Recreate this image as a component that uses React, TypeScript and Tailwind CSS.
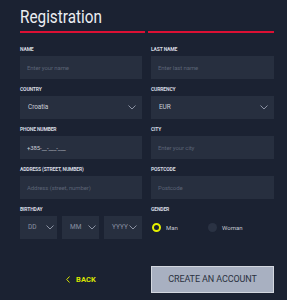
import React from "react";

const Chevron = () => (
  <svg width="8" height="5" viewBox="0 0 8 5" className="shrink-0">
    <polyline points="0.5,0.5 4,4 7.5,0.5" fill="none" stroke="#8b92a3" strokeWidth="1" />
  </svg>
);

const Label = ({ children }: { children: React.ReactNode }) => (
  <div className="h-[8px] mb-[3px] text-[5px] leading-[8px] font-bold tracking-[-0.15px] text-[#d6d9e0] uppercase">
    {children}
  </div>
);

const Input = ({ placeholder, value }: { placeholder?: string; value?: string }) => (
  <div className="h-[23px] bg-[#272f3f] flex items-center pl-[7px] text-[6px] tracking-[-0.1px]">
    {value ? (
      <span className="text-[#c9cdd6]">{value}</span>
    ) : (
      <span className="text-[#5b6375]">{placeholder}</span>
    )}
  </div>
);

const Select = ({ value }: { value: string }) => (
  <div className="h-[23px] bg-[#272f3f] flex items-center justify-between pl-[8px] pr-[6px] text-[6.5px] tracking-[-0.1px]">
    <span className="text-[#c9cdd6]">{value}</span>
    <Chevron />
  </div>
);

const Field = ({ label, children }: { label: string; children: React.ReactNode }) => (
  <div className="flex flex-col">
    <Label>{label}</Label>
    {children}
  </div>
);

export default function App() {
  return (
    <div className="w-[287px] h-[300px] bg-[#1b2232] font-['Roboto',sans-serif] overflow-hidden">
      <div className="pl-[20px] pr-[13px] pt-[6px]">
        <h1 className="text-[18px] leading-[21px] text-[#eceef2] font-normal">
          <span className="inline-block scale-x-[0.85] origin-left">Registration</span>
        </h1>
        <div className="mt-[4px] flex gap-[3px]">
          <div className="h-[2px] w-[125px] bg-[#dc1034]" />
          <div className="h-[2px] flex-1 bg-[#dc1034]" />
        </div>
        <div className="mt-[12px] grid grid-cols-[122px_123px] gap-x-[9px] gap-y-[6px]">
          <Field label="Name">
            <Input placeholder="Enter your name" />
          </Field>
          <Field label="Last name">
            <Input placeholder="Enter last name" />
          </Field>
          <Field label="Country">
            <Select value="Croatia" />
          </Field>
          <Field label="Currency">
            <Select value="EUR" />
          </Field>
          <Field label="Phone number">
            <Input value="+385-__-___-___" />
          </Field>
          <Field label="City">
            <Input placeholder="Enter your city" />
          </Field>
          <Field label="Address (street, number)">
            <Input placeholder="Address (street, number)" />
          </Field>
          <Field label="Postcode">
            <Input placeholder="Postcode" />
          </Field>
          <Field label="Birthday">
            <div className="flex gap-[5px]">
              <div className="w-[37px] h-[23px] bg-[#272f3f] flex items-center pl-[8px] gap-[9px] text-[6.5px] text-[#8b92a3]">
                <span>DD</span>
                <Chevron />
              </div>
              <div className="w-[37px] h-[23px] bg-[#272f3f] flex items-center pl-[8px] gap-[7px] text-[6.5px] text-[#8b92a3]">
                <span>MM</span>
                <Chevron />
              </div>
              <div className="flex-1 h-[23px] bg-[#272f3f] flex items-center pl-[8px] gap-[1px] text-[6.5px] text-[#8b92a3]">
                <span>YYYY</span>
                <Chevron />
              </div>
            </div>
          </Field>
          <Field label="Gender">
            <div className="h-[23px] flex items-center pl-[1px]">
              <div className="w-[56px] flex items-center gap-[5px]">
                <div className="w-[9px] h-[9px] rounded-full border-[2px] border-[#e4f000] bg-[#1b2232]" />
                <span className="text-[6px] text-[#c3c7cf]">Man</span>
              </div>
              <div className="flex items-center gap-[5px]">
                <div className="w-[9px] h-[9px] rounded-full bg-[#2a3243]" />
                <span className="text-[6px] text-[#c3c7cf]">Woman</span>
              </div>
            </div>
          </Field>
        </div>
        <div className="mt-[27px] grid grid-cols-[122px_123px] gap-x-[9px]">
          <div className="flex items-center justify-center gap-[6px] text-[#d8e400]">
            <svg width="4" height="7" viewBox="0 0 4 7">
              <polyline points="3.5,0.5 0.7,3.5 3.5,6.5" fill="none" stroke="#d8e400" strokeWidth="1" />
            </svg>
            <span className="text-[7.5px] font-bold tracking-[0.1px]">BACK</span>
          </div>
          <div className="h-[27px] bg-[#a8b0c1] border border-[#d3d7df] flex items-center justify-center text-[9px] text-[#2b3140] tracking-[-0.1px]">
            CREATE AN ACCOUNT
          </div>
        </div>
      </div>
    </div>
  );
}
